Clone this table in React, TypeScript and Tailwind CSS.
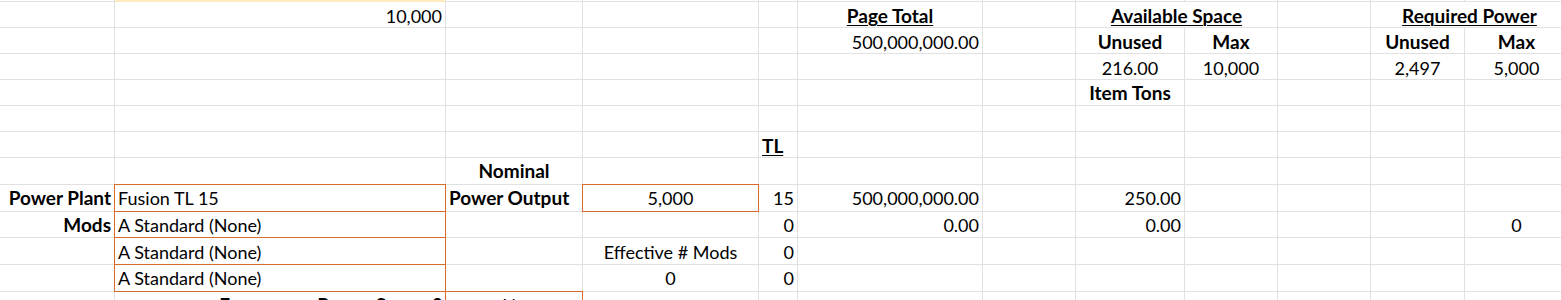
import clsx from "clsx";

type Cell = {
  t?: string;
  a?: "l" | "c" | "r";
  b?: boolean;
  u?: boolean;
  box?: boolean;
  span?: number;
};

type Row = {
  pb: string;
  cells: Record<number, Cell>;
};

const COLS = 12;

// sheet rows 1..12 (the sliver above row 1 is drawn separately)
const rows: Row[] = [
  {
    pb: "pb-[2px]",
    cells: {
      1: { t: "10,000", a: "r" },
      5: { t: "Page Total", a: "c", b: true, u: true },
      7: { t: "Available Space", a: "c", b: true, u: true, span: 2 },
      10: { t: "Required Power", a: "c", b: true, u: true, span: 2 },
    },
  },
  {
    pb: "pb-[2px]",
    cells: {
      5: { t: "500,000,000.00", a: "r" },
      7: { t: "Unused", a: "c", b: true },
      8: { t: "Max", a: "c", b: true },
      10: { t: "Unused", a: "c", b: true },
      11: { t: "Max", a: "c", b: true },
    },
  },
  {
    pb: "pb-[2px]",
    cells: {
      7: { t: "216.00", a: "c" },
      8: { t: "10,000", a: "c" },
      10: { t: "2,497", a: "c" },
      11: { t: "5,000", a: "c" },
    },
  },
  {
    pb: "pb-[3px]",
    cells: {
      7: { t: "Item Tons", a: "c", b: true },
    },
  },
  { pb: "pb-[3px]", cells: {} },
  {
    pb: "pb-[2px]",
    cells: {
      4: { t: "TL", a: "l", b: true, u: true },
    },
  },
  {
    pb: "pb-[4px]",
    cells: {
      2: { t: "Nominal", a: "c", b: true },
    },
  },
  {
    pb: "pb-[4px]",
    cells: {
      0: { t: "Power Plant", a: "r", b: true },
      1: { t: "Fusion TL 15", a: "l", box: true },
      2: { t: "Power Output", a: "l", b: true },
      3: { t: "5,000", a: "c", box: true },
      4: { t: "15", a: "r" },
      5: { t: "500,000,000.00", a: "r" },
      7: { t: "250.00", a: "r" },
    },
  },
  {
    pb: "pb-[3px]",
    cells: {
      0: { t: "Mods", a: "r", b: true },
      1: { t: "A Standard (None)", a: "l", box: true },
      4: { t: "0", a: "r" },
      5: { t: "0.00", a: "r" },
      7: { t: "0.00", a: "r" },
      11: { t: "0", a: "c" },
    },
  },
  {
    pb: "pb-[3px]",
    cells: {
      1: { t: "A Standard (None)", a: "l", box: true },
      3: { t: "Effective # Mods", a: "c" },
      4: { t: "0", a: "r" },
    },
  },
  {
    pb: "pb-[4px]",
    cells: {
      1: { t: "A Standard (None)", a: "l", box: true },
      3: { t: "0", a: "c" },
      4: { t: "0", a: "r" },
    },
  },
  {
    pb: "pb-[4px]",
    cells: {
      1: { t: "Emergency Power Source?", a: "r", b: true },
      2: { t: "No", a: "c", box: true },
    },
  },
];

function expand(defs: Record<number, Cell>) {
  const out: Cell[] = [];
  for (let i = 0; i < COLS; i++) {
    const c = defs[i] ?? {};
    out.push(c);
    if (c.span === 2) i++;
  }
  return out;
}

function SheetCell({ cell, pb }: { cell: Cell; pb: string }) {
  return (
    <div
      className={clsx(
        "flex items-end whitespace-nowrap border-r border-b px-[3px]",
        pb,
        cell.span === 2 && "col-span-2",
        cell.a === "c" && "justify-center",
        cell.a === "r" && "justify-end",
        cell.box
          ? "border-[#d86a2a] shadow-[0_-1px_0_0_#d86a2a,-1px_0_0_0_#d86a2a,-1px_-1px_0_0_#d86a2a]"
          : "border-[#e1e1e1]"
      )}
    >
      {cell.t && (
        <span
          className={clsx(
            cell.b && "font-bold text-[19px]",
            cell.u && "underline decoration-1 underline-offset-[2px]"
          )}
        >
          {cell.t}
        </span>
      )}
    </div>
  );
}

export default function App() {
  return (
    <div className="w-[1561px] h-[300px] overflow-hidden bg-white text-black">
      <div className="grid w-max grid-cols-[115px_331px_137px_176px_39px_185px_93px_109px_93px_93px_94px_104px] grid-rows-[2px_26px_26px_26px_26px_26px_26px_27px_27px_26px_27px_27px_27px] font-['Lato','Carlito',sans-serif] text-[18px] leading-none">
        {/* sliver of the row above */}
        {Array.from({ length: COLS }).map((_, i) => (
          <div
            key={`top-${i}`}
            className={clsx(
              "border-r border-b",
              i === 1 ? "bg-[#fdebbf] border-b-[#fdebbf] border-r-[#e1e1e1]" : "border-[#e1e1e1]"
            )}
          />
        ))}
        {rows.map((row, r) =>
          expand(row.cells).map((cell, i) => <SheetCell key={`${r}-${i}`} cell={cell} pb={row.pb} />)
        )}
      </div>
    </div>
  );
}
